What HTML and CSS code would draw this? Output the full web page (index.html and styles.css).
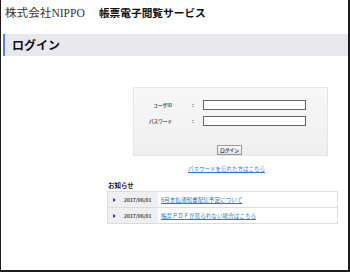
FILE: index.html
```html
<!DOCTYPE html>
<html lang="ja">
<head>
    <meta charset="UTF-8">
    <title>帳票電子閲覧サービス - ログイン</title>
    <link rel="stylesheet" href="styles.css">
</head>
<body>

<div class="frame">
    <div class="header">
        <span class="company">株式会社NIPPO</span>
        <span class="service">帳票電子閲覧サービス</span>
    </div>

    <h1 class="page-title">ログイン</h1>

    <div class="content">
        <form class="login-box" onsubmit="return false;">
            <div class="login-grid">
                <label for="user-id" class="label">ユーザID</label>
                <span class="colon">:</span>
                <input type="text" id="user-id" class="text-input">

                <label for="password" class="label">パスワード</label>
                <span class="colon">:</span>
                <input type="password" id="password" class="text-input">
            </div>
            <div class="button-row">
                <button type="submit" class="login-button">ログイン</button>
            </div>
        </form>

        <p class="forgot"><a href="#">パスワードを忘れた方はこちら</a></p>

        <h2 class="news-title">お知らせ</h2>
        <table class="news">
            <tr>
                <td class="news-date"><span class="arrow"></span>2017/06/01</td>
                <td class="news-link"><a href="#">6月支払通知書配信予定について</a></td>
            </tr>
            <tr>
                <td class="news-date"><span class="arrow"></span>2017/06/01</td>
                <td class="news-link"><a href="#">帳票ＰＤＦが見られない場合はこちら</a></td>
            </tr>
        </table>
    </div>
</div>

</body>
</html>
```

FILE: styles.css
```css
body {
    margin: 0;
    font-family: "Noto Sans CJK JP", "Liberation Sans", sans-serif;
    color: #222;
    background: #fff;
}

.frame {
    width: 350px;
    height: 272px;
    box-sizing: border-box;
    border-left: 1px solid #1c1c1c;
    border-right: 2px solid #1c1c1c;
    border-bottom: 2px solid #1c1c1c;
    overflow: hidden;
}

.header {
    height: 34px;
    padding-left: 4px;
    display: flex;
    align-items: center;
    padding-bottom: 10px;
    box-sizing: border-box;
}

.company {
    font-family: "Liberation Serif", "Noto Sans CJK JP", serif;
    font-size: 11.6px;
    color: #333;
}

.service {
    margin-left: 14px;
    font-size: 10.7px;
    font-weight: bold;
    color: #111;
}

.page-title {
    margin: 0 0 0 2px;
    height: 22px;
    line-height: 22px;
    padding-left: 7px;
    background-color: #e8e7ee;
    border-left: 2px solid #5a7fd8;
    font-size: 12px;
    font-weight: bold;
    color: #111;
}

.content {
    margin-left: 106px;
    width: 231px;
}

.login-box {
    margin: 31px 0 0 26px;
    width: 195px;
    height: 69px;
    box-sizing: border-box;
    padding-top: 12px;
    background: linear-gradient(#f7f7f7, #efefef);
    border: 1px solid #e4e4e4;
}

.login-grid {
    display: grid;
    grid-template-columns: 38px 31px 103px;
    row-gap: 6px;
    align-items: center;
}

.label {
    text-align: right;
    font-size: 4.6px;
    font-weight: bold;
    color: #555;
}

.colon {
    padding-left: 20px;
    font-size: 5.5px;
    font-weight: bold;
    color: #555;
}

.text-input {
    width: 103px;
    height: 10px;
    box-sizing: border-box;
    margin: 0;
    padding: 0;
    border: 1px solid #666;
    background: #fff;
}

.button-row {
    margin-top: 7px;
    padding-left: 83px;
}

.login-button {
    width: 25px;
    height: 10px;
    padding: 0;
    margin: 0;
    font-family: inherit;
    font-size: 4.8px;
    font-weight: bold;
    color: #444;
    background: linear-gradient(#fafafa, #e2e2e2);
    border: 1px solid #999;
}

.forgot {
    margin: 9px 0 0;
    text-align: center;
    padding-left: 8px;
    font-size: 5.5px;
    line-height: 8px;
}

.forgot a,
.news-link a {
    color: #2a78d2;
}

.news-title {
    margin: 8px 0 0 1px;
    font-size: 6.5px;
    line-height: 8px;
    font-weight: bold;
    color: #111;
}

.news {
    margin-top: 2px;
    width: 231px;
    border-collapse: collapse;
    border: 1px solid #dcdcdc;
}

.news td {
    height: 15px;
    padding: 0;
    border-bottom: 1px solid #dcdcdc;
}

.news-date {
    width: 50px;
    background-color: #efefef;
    font-size: 5px;
    font-weight: bold;
    color: #444;
    white-space: nowrap;
}

.arrow {
    display: inline-block;
    width: 0;
    height: 0;
    margin: 0 8px 0 5px;
    border-top: 2px solid transparent;
    border-bottom: 2px solid transparent;
    border-left: 3px solid #1d43d0;
}

.news-link {
    padding-left: 3px !important;
    font-size: 5.6px;
}
```
